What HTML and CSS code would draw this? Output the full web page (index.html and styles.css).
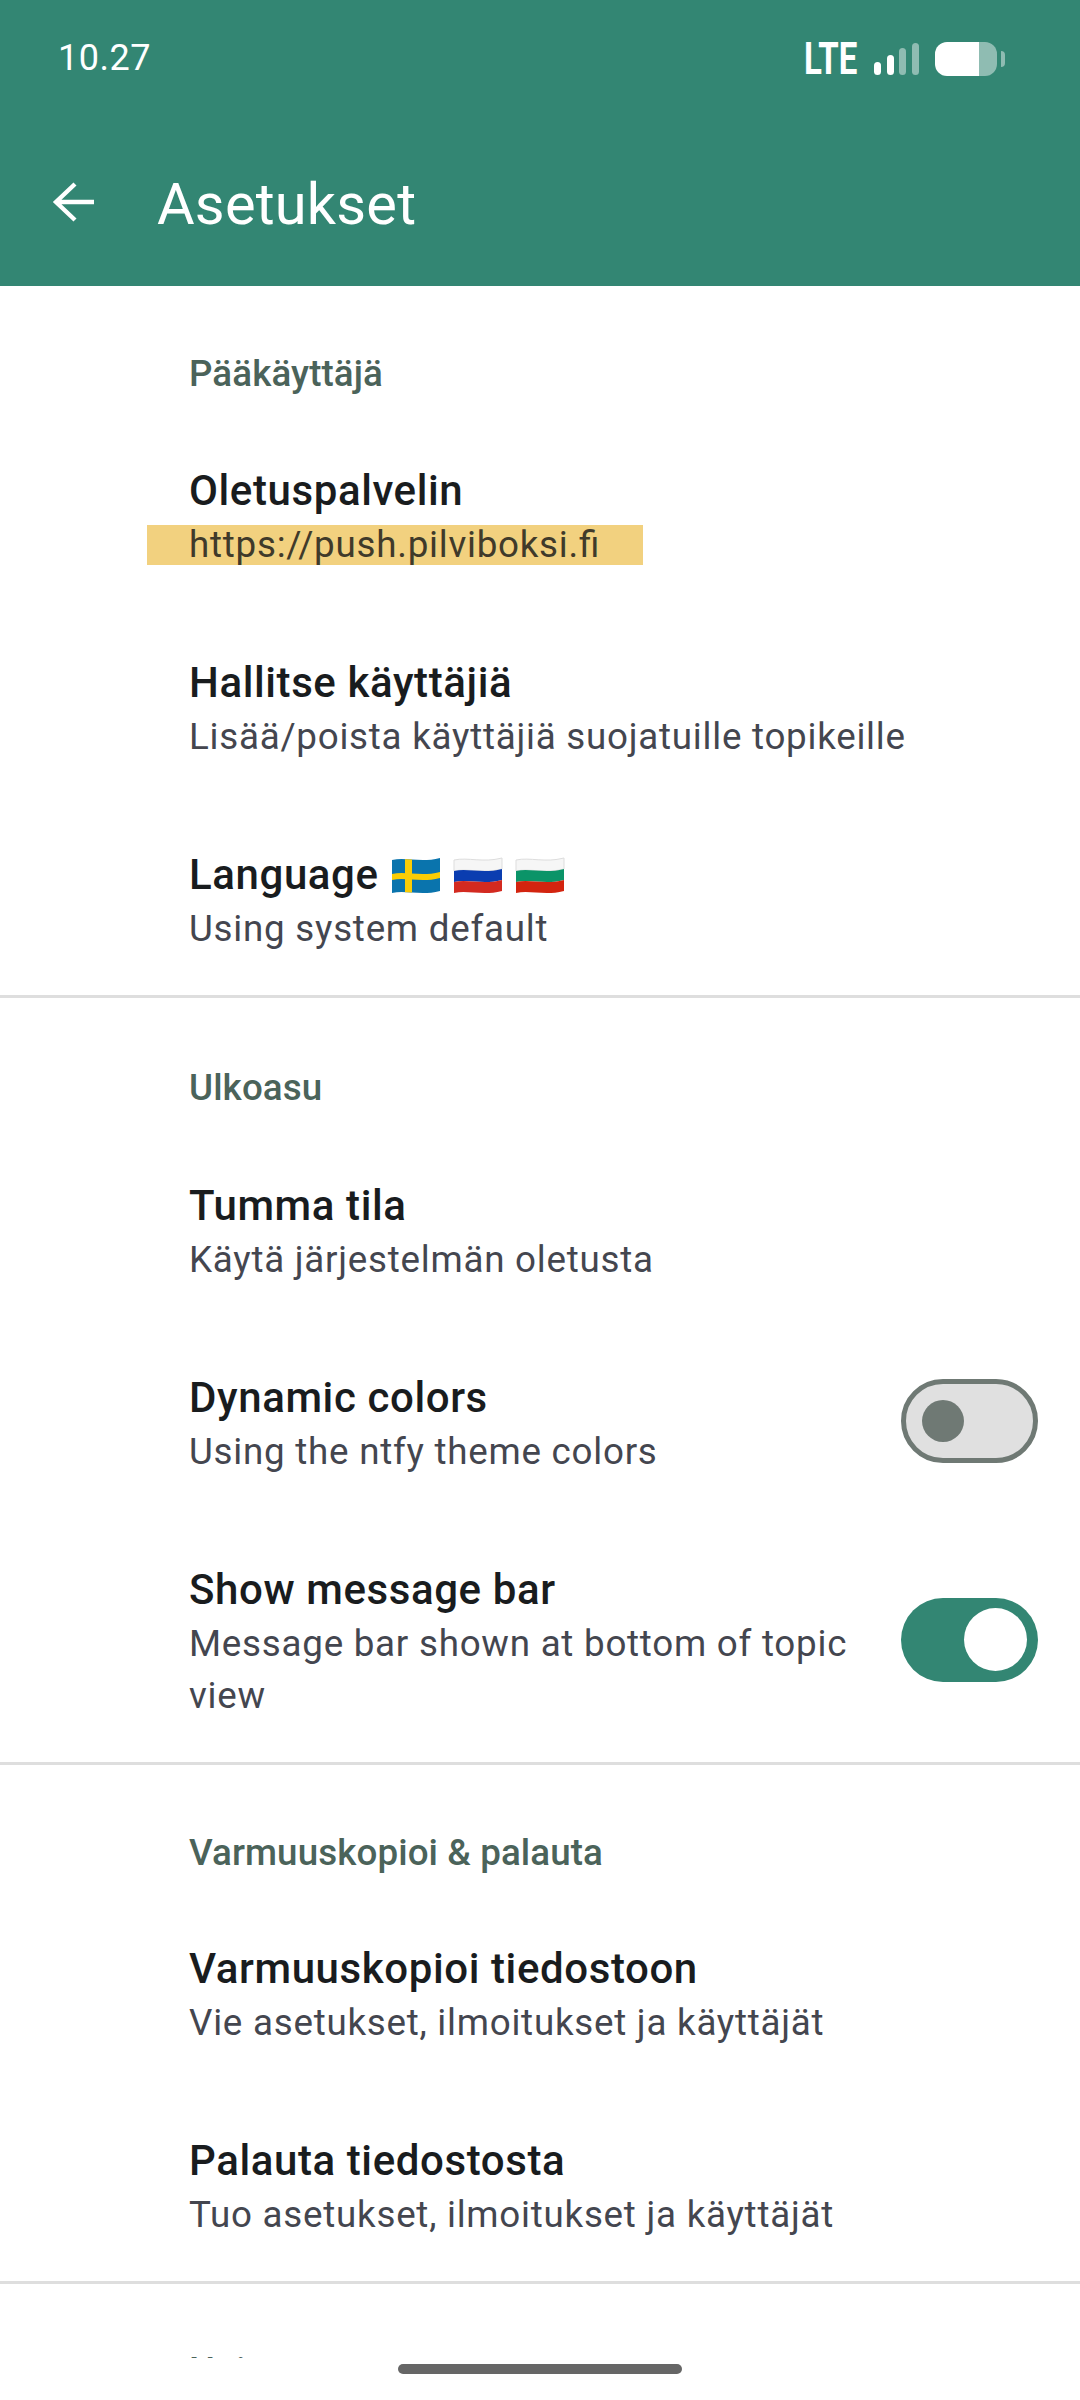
FILE: index.html
```html
<!DOCTYPE html>
<html lang="fi">
<head>
<meta charset="utf-8">
<title>Asetukset</title>
<link rel="stylesheet" href="styles.css">
</head>
<body>
<div class="screen">
  <header class="appbar">
    <div class="status">
      <span class="time">10.27</span>
      <div class="status-icons">
        <span class="lte">LTE</span>
        <svg class="signal" width="45" height="34" viewBox="0 0 45 34">
          <rect x="0" y="20" width="7" height="13" rx="3.5" fill="#fff"/>
          <rect x="13" y="13" width="7" height="20" rx="3.5" fill="#fff"/>
          <rect x="25" y="6" width="7" height="27" rx="3.5" fill="#fff" fill-opacity=".45"/>
          <rect x="38" y="1" width="7" height="32" rx="3.5" fill="#fff" fill-opacity=".45"/>
        </svg>
        <svg class="battery" width="70" height="34" viewBox="0 0 70 34">
          <path d="M12 0H44V34H12A12 12 0 0 1 0 22V12A12 12 0 0 1 12 0Z" fill="#fff"/>
          <path d="M44 0H50A12 12 0 0 1 62 12V22A12 12 0 0 1 50 34H44Z" fill="#fff" fill-opacity=".45"/>
          <path d="M66 9A4 4 0 0 1 70 13V21A4 4 0 0 1 66 25Z" fill="#fff" fill-opacity=".45"/>
        </svg>
      </div>
    </div>
    <div class="toolbar">
      <svg class="back" width="44" height="44" viewBox="0 0 44 44">
        <path d="M42 22H5M23 4L4 22L23 40" fill="none" stroke="#fff" stroke-width="4.4"/>
      </svg>
      <h1 class="title">Asetukset</h1>
    </div>
  </header>

  <main class="content">
    <section class="group first">
      <h2 class="category">Pääkäyttäjä</h2>
      <div class="row">
        <div class="text">
          <div class="row-title">Oletuspalvelin</div>
          <div class="row-sub"><span class="redact">https://push.pilviboksi.<span class="lig">fi</span></span></div>
        </div>
      </div>
      <div class="row">
        <div class="text">
          <div class="row-title">Hallitse käyttäjiä</div>
          <div class="row-sub">Lisää/poista käyttäjiä suojatuille topikeille</div>
        </div>
      </div>
      <div class="row">
        <div class="text">
          <div class="row-title">Language
            <svg class="flag" width="50" height="37" viewBox="0 0 50 37"><defs><clipPath id="wave1"><path d="M1 3C15 0 30 6 49 1V34C30 39 15 33 1 36Z"/></clipPath></defs><g clip-path="url(#wave1)"><rect width="50" height="37" fill="#0a74ad"/><path d="M1 17C15 14 30 20 49 15V21C30 26 15 20 1 23Z" fill="#fbcd05"/><rect x="14" width="7" height="37" fill="#fbcd05"/></g></svg>
            <svg class="flag" width="50" height="37" viewBox="0 0 50 37"><path d="M1 3C15 0 30 6 49 1V12C30 17 15 11 1 14Z" fill="#f6f6f6" stroke="#ddd"/><path d="M1 14C15 11 30 17 49 12V23C30 28 15 22 1 25Z" fill="#0a3db0"/><path d="M1 25C15 22 30 28 49 23V34C30 39 15 33 1 36Z" fill="#d32a20"/></svg>
            <svg class="flag" width="50" height="37" viewBox="0 0 50 37"><path d="M1 3C15 0 30 6 49 1V12C30 17 15 11 1 14Z" fill="#f6f6f6" stroke="#ddd"/><path d="M1 14C15 11 30 17 49 12V23C30 28 15 22 1 25Z" fill="#0b9468"/><path d="M1 25C15 22 30 28 49 23V34C30 39 15 33 1 36Z" fill="#d3240f"/></svg>
          </div>
          <div class="row-sub">Using system default</div>
        </div>
      </div>
    </section>

    <section class="group">
      <h2 class="category">Ulkoasu</h2>
      <div class="row">
        <div class="text">
          <div class="row-title">Tumma tila</div>
          <div class="row-sub">Käytä järjestelmän oletusta</div>
        </div>
      </div>
      <div class="row">
        <div class="text">
          <div class="row-title">Dynamic colors</div>
          <div class="row-sub">Using the ntfy theme colors</div>
        </div>
        <span class="switch off"><span class="thumb"></span></span>
      </div>
      <div class="row">
        <div class="text">
          <div class="row-title">Show message bar</div>
          <div class="row-sub">Message bar shown at bottom of topic view</div>
        </div>
        <span class="switch on"><span class="thumb"></span></span>
      </div>
    </section>

    <section class="group tight">
      <h2 class="category">Varmuuskopioi &amp; palauta</h2>
      <div class="row">
        <div class="text">
          <div class="row-title">Varmuuskopioi tiedostoon</div>
          <div class="row-sub">Vie asetukset, ilmoitukset ja käyttäjät</div>
        </div>
      </div>
      <div class="row">
        <div class="text">
          <div class="row-title">Palauta tiedostosta</div>
          <div class="row-sub">Tuo asetukset, ilmoitukset ja käyttäjät</div>
        </div>
      </div>
    </section>

    <section class="group tight">
      <h2 class="category">Noin</h2>
    </section>
  </main>

  <div class="navbar"><span class="pill"></span></div>
</div>
</body>
</html>
```
FILE: styles.css
```css
* { box-sizing: border-box; }
html, body { margin: 0; padding: 0; background: #fff; }
body { font-family: Roboto, "Noto Sans", sans-serif; }
.screen { position: relative; width: 1080px; height: 2400px; overflow: hidden; background: #fff; display: flex; flex-direction: column; }

.appbar { position: relative; z-index: 1; height: 286px; flex: none; background: #338673; color: #fff; display: flex; flex-direction: column; }
.status { height: 110px; flex: none; display: flex; justify-content: space-between; align-items: flex-start; padding: 38px 75px 0 58px; }
.time { font-size: 36px; line-height: 40px; letter-spacing: 0.5px; }
.status-icons { display: flex; align-items: flex-start; padding-top: 4px; }
.lte { width: 54px; height: 34px; margin-right: 16px; font-weight: 700; font-size: 44px; line-height: 34px; white-space: nowrap; transform: scaleX(0.75); transform-origin: left center; }
.signal { margin-right: 16px; }
.toolbar { flex: 1; display: flex; align-items: center; padding: 8px 0 0 52px; }
.back { flex: none; }
.title { margin: 3px 0 0 61px; font-size: 57.75px; font-weight: 400; line-height: 64px; letter-spacing: 0.2px; }

.content { flex: 1; min-height: 0; overflow: hidden; margin-top: -1px; }
.group { border-bottom: 3px solid #dedede; padding-top: 66.2px; }
.group.first { padding-top: 64.7px; }
.group.tight { padding-top: 63.5px; }
.group:last-child { border-bottom: 0; }
.category { margin: 0 0 23.5px 189px; font-size: 36.75px; font-weight: 500; line-height: 48px; color: #4b635a; letter-spacing: 0.1px; }
.group.tight .category { margin-bottom: 22.2px; }
.row { display: flex; align-items: center; padding: 42px 42px 41.5px 189px; }
.row:last-child { padding-bottom: 39.5px; }
.group.first .row:last-child { padding-bottom: 39.3px; }
.text { flex: 1; min-width: 0; }
.row-title { font-size: 42px; font-weight: 500; line-height: 56px; color: #191c1e; letter-spacing: 0.6px; display: flex; align-items: center; gap: 12px; }
.row-sub { font-size: 36.75px; line-height: 52.5px; color: #44464f; letter-spacing: 0.75px; }
.redact { display: block; background: #f2d17f; color: #403a2a; margin-left: -42px; padding-left: 42px; width: 496px; line-height: 40px; margin-top: 6px; margin-bottom: 6.5px; }
.lig { letter-spacing: 0; }
.flag { flex: none; }

.switch { flex: none; width: 137px; height: 84px; border-radius: 42px; margin: 0 0 5px 24px; display: flex; align-items: center; }
.switch.off { background: #e0e0e0; border: 5px solid #6f7974; padding-left: 16px; }
.switch.off .thumb { width: 42px; height: 42px; border-radius: 50%; background: #6f7974; }
.switch.on { background: #338673; justify-content: flex-end; padding-right: 11px; }
.switch.on .thumb { width: 63px; height: 63px; border-radius: 50%; background: #fff; }

.navbar { position: absolute; left: 0; right: 0; bottom: 0; height: 42px; background: #fff; display: flex; justify-content: center; }
.pill { width: 284px; height: 10px; margin-top: 6px; border-radius: 5px; background: #666; }
```
